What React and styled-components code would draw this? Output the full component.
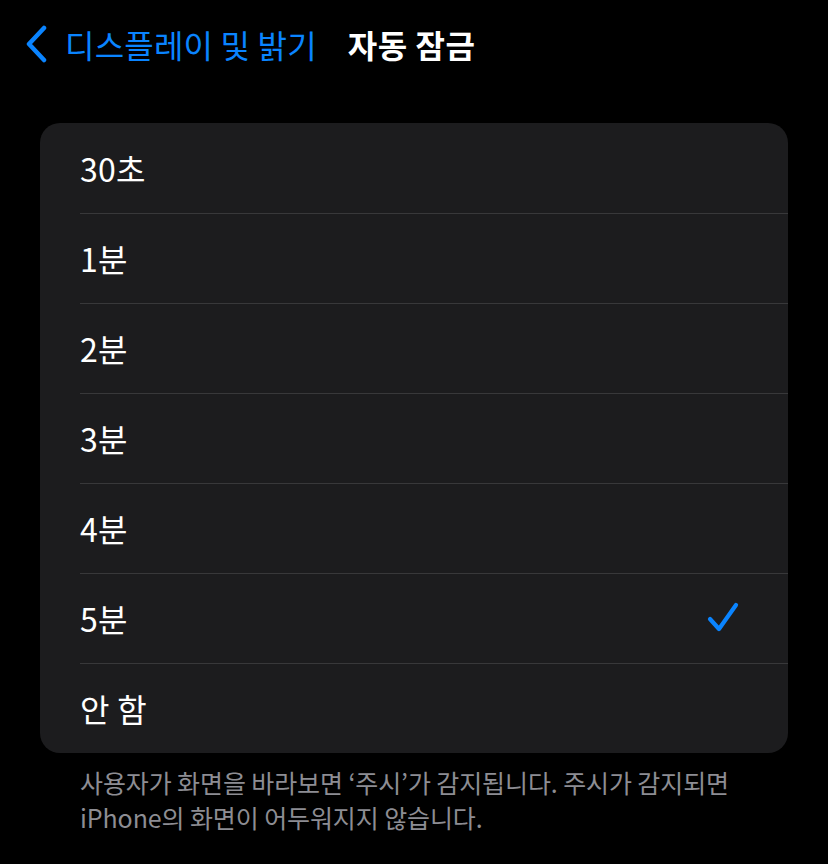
import React from "react";
import styled, { createGlobalStyle } from "styled-components";

const Global = createGlobalStyle`
  html, body {
    margin: 0;
    padding: 0;
    background: #000;
  }
  body {
    font-family: "Noto Sans CJK KR", "Noto Sans", sans-serif;
    -webkit-font-smoothing: antialiased;
  }
`;

const Screen = styled.div`
  width: 828px;
  height: 864px;
  background: #000;
  color: #fff;
  box-sizing: border-box;
  overflow: hidden;
`;

const NavBar = styled.header`
  display: flex;
  align-items: center;
  height: 88px;
  padding: 0 0 0 24px;
  box-sizing: border-box;
`;

const BackButton = styled.button`
  display: flex;
  align-items: center;
  gap: 17px;
  background: none;
  border: 0;
  padding: 0;
  color: #0a84ff;
  font: inherit;
  font-size: 32px;
  letter-spacing: 0.2px;
  cursor: pointer;
`;

const Title = styled.h1`
  margin: 0 0 0 31px;
  font-size: 32px;
  font-weight: 600;
  letter-spacing: 0.5px;
  color: #fff;
`;

const Content = styled.main`
  padding: 35px 40px 0;
`;

const Group = styled.ul`
  list-style: none;
  margin: 0;
  padding: 0;
  background: #1c1c1e;
  border-radius: 20px;
  overflow: hidden;
`;

const Row = styled.li`
  position: relative;
  display: flex;
  align-items: center;
  justify-content: space-between;
  height: 90px;
  padding: 0 47px 0 40px;
  font-size: 32px;
  color: #fff;

  & + &::before {
    content: "";
    position: absolute;
    top: 0;
    left: 40px;
    right: 0;
    height: 1px;
    background: #38383a;
  }
`;

const Label = styled.span`
  letter-spacing: 0.3px;
`;

const Footer = styled.p`
  margin: 0;
  padding: 12px 40px 0 40px;
  font-size: 25px;
  line-height: 35px;
  color: #8d8d93;
  letter-spacing: -0.1px;
`;

const Chevron = () => (
  <svg width="24" height="38" viewBox="0 0 24 38" fill="none">
    <path
      d="M20 3 L5 19 L20 35"
      stroke="#0a84ff"
      strokeWidth="4.5"
      strokeLinecap="round"
      strokeLinejoin="round"
    />
  </svg>
);

const Check = () => (
  <svg width="34" height="34" viewBox="0 0 34 34" fill="none">
    <path
      d="M3 18 L12 28 L29 4"
      stroke="#0a84ff"
      strokeWidth="4.2"
      strokeLinecap="round"
      strokeLinejoin="round"
    />
  </svg>
);

const options = ["30초", "1분", "2분", "3분", "4분", "5분", "안 함"];
const selected = "5분";

export default function App() {
  return (
    <Screen>
      <Global />
      <NavBar>
        <BackButton>
          <Chevron />
          디스플레이 및 밝기
        </BackButton>
        <Title>자동 잠금</Title>
      </NavBar>
      <Content>
        <Group>
          {options.map((o) => (
            <Row key={o}>
              <Label>{o}</Label>
              {o === selected && <Check />}
            </Row>
          ))}
        </Group>
        <Footer>
          사용자가 화면을 바라보면 ‘주시’가 감지됩니다. 주시가 감지되면
          <br />
          iPhone의 화면이 어두워지지 않습니다.
        </Footer>
      </Content>
    </Screen>
  );
}
